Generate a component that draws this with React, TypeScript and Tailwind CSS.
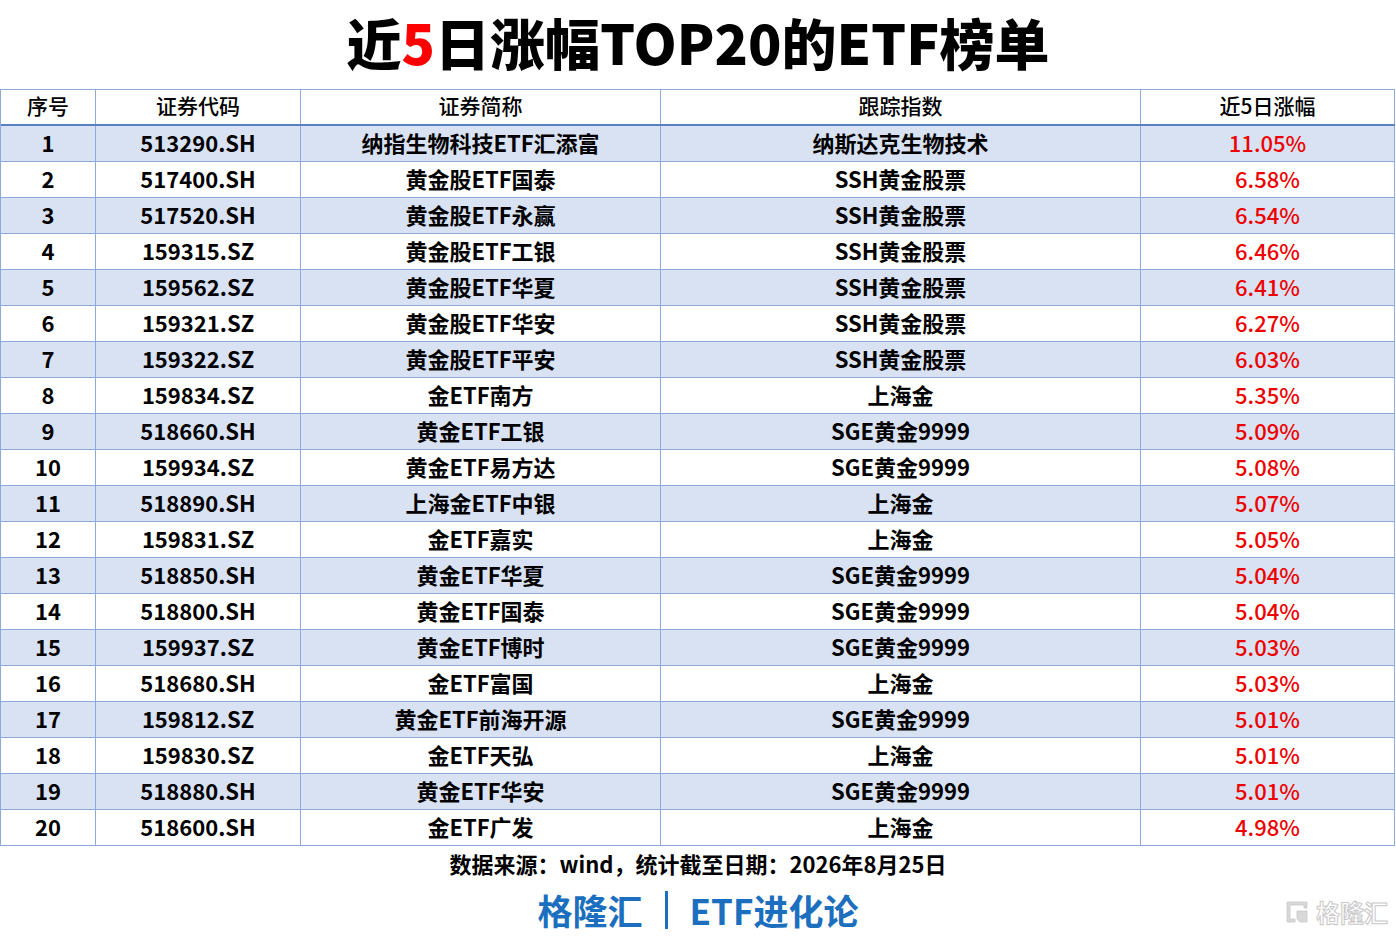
import React from "react";

const rows: [string, string, string, string, string][] = [
  ["1", "513290.SH", "纳指生物科技ETF汇添富", "纳斯达克生物技术", "11.05%"],
  ["2", "517400.SH", "黄金股ETF国泰", "SSH黄金股票", "6.58%"],
  ["3", "517520.SH", "黄金股ETF永赢", "SSH黄金股票", "6.54%"],
  ["4", "159315.SZ", "黄金股ETF工银", "SSH黄金股票", "6.46%"],
  ["5", "159562.SZ", "黄金股ETF华夏", "SSH黄金股票", "6.41%"],
  ["6", "159321.SZ", "黄金股ETF华安", "SSH黄金股票", "6.27%"],
  ["7", "159322.SZ", "黄金股ETF平安", "SSH黄金股票", "6.03%"],
  ["8", "159834.SZ", "金ETF南方", "上海金", "5.35%"],
  ["9", "518660.SH", "黄金ETF工银", "SGE黄金9999", "5.09%"],
  ["10", "159934.SZ", "黄金ETF易方达", "SGE黄金9999", "5.08%"],
  ["11", "518890.SH", "上海金ETF中银", "上海金", "5.07%"],
  ["12", "159831.SZ", "金ETF嘉实", "上海金", "5.05%"],
  ["13", "518850.SH", "黄金ETF华夏", "SGE黄金9999", "5.04%"],
  ["14", "518800.SH", "黄金ETF国泰", "SGE黄金9999", "5.04%"],
  ["15", "159937.SZ", "黄金ETF博时", "SGE黄金9999", "5.03%"],
  ["16", "518680.SH", "金ETF富国", "上海金", "5.03%"],
  ["17", "159812.SZ", "黄金ETF前海开源", "SGE黄金9999", "5.01%"],
  ["18", "159830.SZ", "金ETF天弘", "上海金", "5.01%"],
  ["19", "518880.SH", "黄金ETF华安", "SGE黄金9999", "5.01%"],
  ["20", "518600.SH", "金ETF广发", "上海金", "4.98%"],
];

const grid = "grid grid-cols-[95px_205px_360px_480px_254px]";
const cell = "flex items-center justify-center border-r border-[#8eaadb] pb-[2px]";

export default function App() {
  return (
    <div
      className="relative w-[1396px] h-[941px] bg-white text-black overflow-hidden"
      style={{ fontFamily: '"Noto Sans CJK SC", "Noto Sans", sans-serif' }}
    >
      <div className="h-[89px] flex items-center justify-center">
        <h1 className="text-[55px] leading-none font-black mt-[-6px]">
          近<span className="text-[#ff0000]">5</span>日涨幅TOP20的ETF榜单
        </h1>
      </div>

      <div className="w-[1395px] border-t border-l border-[#8eaadb]">
        <div className={`${grid} h-[36px] border-b-2 border-[#5b7fc4] text-[21px] font-medium`}>
          <div className={cell}>序号</div>
          <div className={cell}>证券代码</div>
          <div className={cell}>证券简称</div>
          <div className={cell}>跟踪指数</div>
          <div className={cell}>近5日涨幅</div>
        </div>
        {rows.map((r, i) => (
          <div
            key={r[0]}
            className={`${grid} h-[36px] border-b border-[#8eaadb] text-[22px] font-bold ${
              i % 2 === 0 ? "bg-[#d9e2f3]" : "bg-white"
            }`}
          >
            <div className={cell}>{r[0]}</div>
            <div className={cell}>{r[1]}</div>
            <div className={cell}>{r[2]}</div>
            <div className={cell}>{r[3]}</div>
            <div className={`${cell} text-[#ee0000] font-medium`}>{r[4]}</div>
          </div>
        ))}
      </div>

      <div className="h-[35px] flex items-center justify-center text-[22px] font-bold">
        数据来源：wind，统计截至日期：2026年8月25日
      </div>
      <div className="h-[52px] mt-[3px] flex items-center justify-center text-[35px] font-bold text-[#1b6fbe]">
        <span>格隆汇</span>
        <span className="mx-[22px] inline-block w-[3px] h-[38px] bg-[#1b6fbe]" />
        <span>ETF进化论</span>
      </div>

      <div className="absolute right-[8px] bottom-[16px] flex items-center gap-[6px]">
        <svg width="26" height="26" viewBox="0 0 26 26" fill="none">
          <path d="M3 3h20v6h-3V6H6v14h5v3H3z" fill="#d8d8d8" stroke="#c8c8c8" strokeWidth="0.8" />
          <path d="M13 12h10v11h-7l-3-3z" fill="#d8d8d8" stroke="#c8c8c8" strokeWidth="0.8" />
        </svg>
        <span
          className="text-[24px] font-bold leading-none"
          style={{ color: "#ffffff", WebkitTextStroke: "1px #c8c8c8" }}
        >
          格隆汇
        </span>
      </div>
    </div>
  );
}
